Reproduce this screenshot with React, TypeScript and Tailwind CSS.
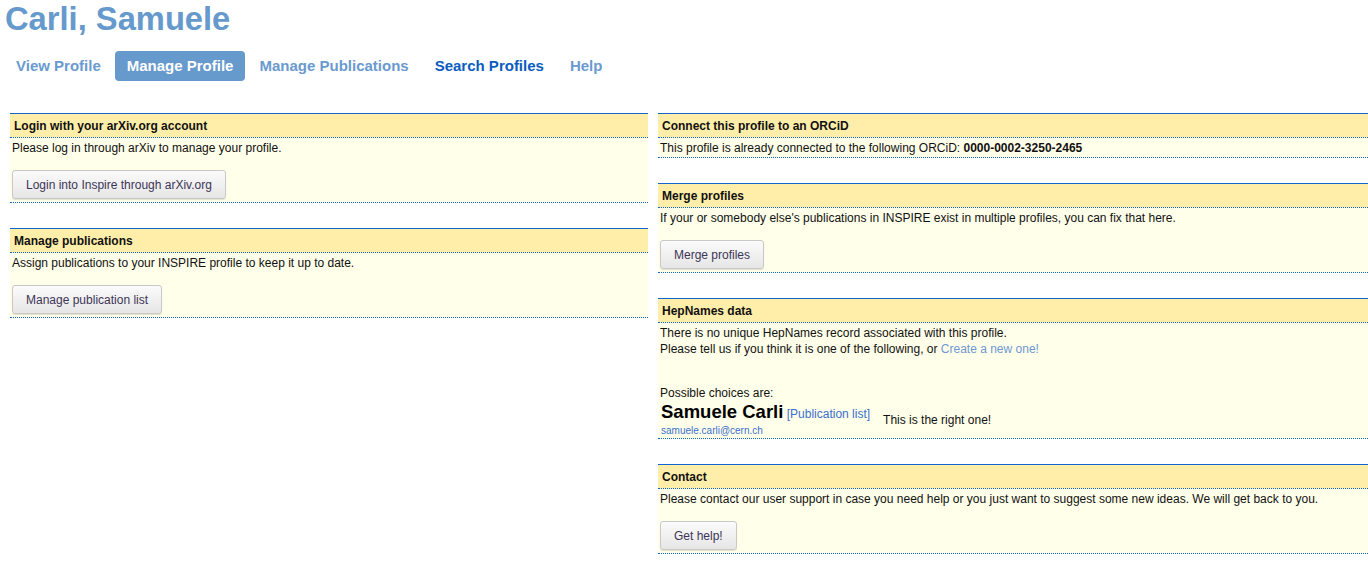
import { ReactNode } from 'react';

function Panel({ title, children }: { title: string; children: ReactNode }) {
  return (
    <div className="mb-[25px] border-t border-t-[#1166cc] bg-[#ffffea]">
      <div className="h-[24px] border-b border-dotted border-b-[#1166cc] bg-[#ffeeaa] px-1 pt-[1px] text-[12px] font-bold leading-[23px] text-[#111]">
        {title}
      </div>
      <div className="border-b border-dotted border-b-[#1166cc] px-[2px] pt-[2px] pb-[1px] text-[12px] leading-4 text-[#111]">
        {children}
      </div>
    </div>
  );
}

function Btn({ label }: { label: string }) {
  return (
    <button className="mt-[14px] mb-[2px] h-[29px] rounded-[3px] border border-[#c8c8c8] bg-gradient-to-b from-[#fbfbfb] to-[#e6e6e6] px-[13px] text-[12px] text-[#3d3557] shadow-[0_1px_1px_rgba(0,0,0,0.12)]">
      {label}
    </button>
  );
}

const tabs = ['View Profile', 'Manage Profile', 'Manage Publications', 'Search Profiles', 'Help'];

export default function App() {
  return (
    <div className="min-h-[563px] w-[1368px] overflow-hidden bg-white font-['Liberation_Sans',Arial,sans-serif]">
      <h1 className="px-[5px] text-[32.7px] font-bold leading-[38px] text-[#6699cc]">Carli, Samuele</h1>
      <nav className="mt-[13px] flex gap-[2px] px-[4px]">
        {tabs.map((t) => (
          <span
            key={t}
            className={
              t === 'Manage Profile'
                ? 'h-[30px] rounded-[4px] bg-[#6699cc] px-3 text-[15px] font-bold leading-[30px] text-white'
                : t === 'Search Profiles'
                  ? 'h-[30px] px-3 text-[15px] font-bold leading-[30px] text-[#0b5cc0]'
                  : 'h-[30px] px-3 text-[15px] font-bold leading-[30px] text-[#6a9ad0]'
            }
          >
            {t}
          </span>
        ))}
      </nav>

      <div className="mt-[32px] flex gap-[10px] pl-[10px]">
        <div className="w-[638px] shrink-0">
          <Panel title="Login with your arXiv.org account">
            <div>Please log in through arXiv to manage your profile.</div>
            <Btn label="Login into Inspire through arXiv.org" />
          </Panel>
          <Panel title="Manage publications">
            <div>Assign publications to your INSPIRE profile to keep it up to date.</div>
            <Btn label="Manage publication list" />
          </Panel>
        </div>

        <div className="flex-1">
          <Panel title="Connect this profile to an ORCiD">
            <div>
              This profile is already connected to the following ORCiD: <b>0000-0002-3250-2465</b>
            </div>
          </Panel>
          <Panel title="Merge profiles">
            <div>If your or somebody else's publications in INSPIRE exist in multiple profiles, you can fix that here.</div>
            <Btn label="Merge profiles" />
          </Panel>
          <Panel title="HepNames data">
            <div>There is no unique HepNames record associated with this profile.</div>
            <div>
              Please tell us if you think it is one of the following, or{' '}
              <a className="text-[#6f97d3]">Create a new one!</a>
            </div>
            <div className="mt-[28px]">Possible choices are:</div>
            <div className="flex items-center">
              <div className="pl-px">
                <div className="leading-[21px]">
                  <span className="text-[18.5px] font-bold text-black">Samuele Carli</span>{' '}
                  <a className="text-[12px] text-[#3a6fcf]">[Publication list]</a>
                </div>
                <div className="text-[10px] leading-3 text-[#3a6fcf]">samuele.carli@cern.ch</div>
              </div>
              <div className="ml-[13px] mt-[1px]">This is the right one!</div>
            </div>
          </Panel>
          <Panel title="Contact">
            <div>Please contact our user support in case you need help or you just want to suggest some new ideas. We will get back to you.</div>
            <Btn label="Get help!" />
          </Panel>
        </div>
      </div>
    </div>
  );
}
